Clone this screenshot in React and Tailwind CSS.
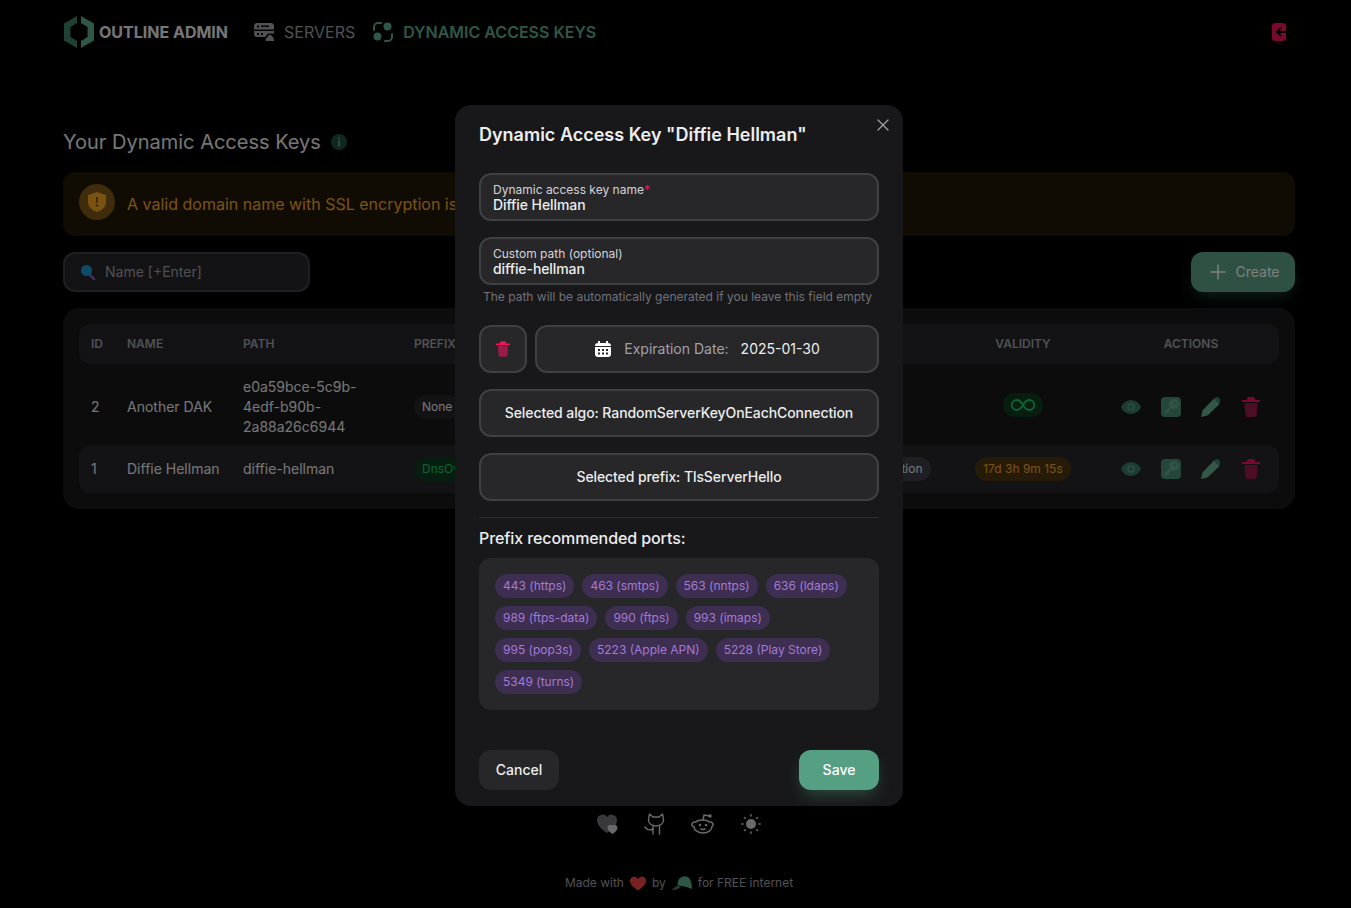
import { Plus, X } from 'lucide-react';
import { TbBrandReddit } from 'react-icons/tb';

const PORTS = [
  '443 (https)',
  '463 (smtps)',
  '563 (nntps)',
  '636 (ldaps)',
  '989 (ftps-data)',
  '990 (ftps)',
  '993 (imaps)',
  '995 (pop3s)',
  '5223 (Apple APN)',
  '5228 (Play Store)',
  '5349 (turns)',
];

const Logo = () => (
  <svg viewBox="0 0 30 32" className="h-8 w-[30px]">
    <path d="M13 0v7L6.500 11v10L13 25v7L0 24.500V7.500z" fill="#3f8068" />
    <path d="M17 0l13 7.500v17L17 32v-7l6.500-4V11L17 7z" fill="#5fae8e" />
  </svg>
);

const ServersIcon = () => (
  <svg viewBox="0 0 20 18" className="h-[18px] w-5" fill="#a1a1aa">
    <path d="M3 0h14a3 3 0 0 1 3 3v3.500H0V3a3 3 0 0 1 3-3z" />
    <path d="M0 8h20v2.500h-6L11 14H3a3 3 0 0 1-3-3z" />
    <path d="M11.500 18l.5-2.500 3-3.500h2l2.500 3 .5 3z" />
    <rect x="3" y="2.500" width="2" height="2" fill="#000" />
    <rect x="7" y="2.500" width="8" height="1.500" fill="#000" />
    <rect x="3" y="10" width="2" height="2" fill="#000" />
    <rect x="7" y="10" width="2" height="2" fill="#000" />
  </svg>
);

const KeysIcon = () => (
  <svg viewBox="0 0 20 20" className="h-5 w-5" fill="#5fae8e">
    <circle cx="14.500" cy="4.500" r="4" />
    <circle cx="4.500" cy="14.500" r="4" />
    <path d="M1 8V5a4 4 0 0 1 4-4h3M19 12v3a4 4 0 0 1-4 4h-3" fill="none" stroke="#5fae8e" strokeWidth="2" strokeLinecap="round" />
  </svg>
);

const LogoutIcon = () => (
  <svg viewBox="0 0 14 18" className="h-[18px] w-[14px]">
    <path d="M3 0h8a3 3 0 0 1 3 3v12a3 3 0 0 1-3 3H3a3 3 0 0 1-3-3V3a3 3 0 0 1 3-3z" fill="#f31260" />
    <path d="M9 5L5 9l4 4M5 9h9" fill="none" stroke="#000" strokeWidth="2" />
  </svg>
);

const InfoIcon = () => (
  <svg viewBox="0 0 16 16" className="h-4 w-4">
    <circle cx="8" cy="8" r="8" fill="#1f4f3d" />
    <rect x="7.200" y="3.500" width="1.600" height="1.800" fill="#5fae8e" />
    <rect x="7.200" y="6.500" width="1.600" height="6" fill="#5fae8e" />
  </svg>
);

const ShieldIcon = () => (
  <svg viewBox="0 0 18 20" className="h-5 w-[18px]">
    <path d="M9 0l9 3v7c0 5-4 8.500-9 10-5-1.500-9-5-9-10V3z" fill="#f5a524" />
    <rect x="8" y="5" width="2" height="6" rx="1" fill="#7a5616" />
    <circle cx="9" cy="13.500" r="1.200" fill="#7a5616" />
  </svg>
);

const SearchIcon = () => (
  <svg viewBox="0 0 16 16" className="h-4 w-4">
    <path d="M9.500 10.500L14 15" stroke="#7c5cc4" strokeWidth="2.500" strokeLinecap="round" />
    <circle cx="6.500" cy="6.500" r="5.500" fill="#1d9bd1" />
  </svg>
);

const EyeIcon = () => (
  <svg viewBox="0 0 20 14" className="h-[14px] w-5">
    <path d="M10 0c5 0 9 4 10 7-1 3-5 7-10 7S1 10 0 7c1-3 5-7 10-7z" fill="#3d7a64" />
    <circle cx="10" cy="7" r="3" fill="none" stroke="#5e9a84" strokeWidth="1.500" />
  </svg>
);

const KeyIcon = () => (
  <svg viewBox="0 0 20 20" className="h-5 w-5">
    <rect width="20" height="20" rx="4" fill="#4a8e76" />
    <circle cx="13" cy="7" r="5" fill="#63a88c" />
    <circle cx="14" cy="6" r="1.300" fill="#4a8e76" />
    <path d="M10 10l-6 6" stroke="#63a88c" strokeWidth="2.500" />
    <path d="M6 13l2 2" stroke="#63a88c" strokeWidth="2" />
  </svg>
);

const PencilIcon = () => (
  <svg viewBox="0 0 20 20" className="h-5 w-5">
    <path d="M13 1.500l5.500 5.500L6.500 18.500 0 20l1.500-6.500z" fill="#66b08f" />
    <path d="M13 1.500l1.500-1c1-.7 2.500-.6 3.500.4s1.700 2.600 1 3.600L18.500 7z" fill="#3f8068" />
  </svg>
);

const TrashIcon = ({ className }) => (
  <svg viewBox="0 0 18 20" className={className}>
    <path d="M6 0h6l1.500 3H18v2H0V3h4.500z" fill="#f31260" />
    <path d="M2.500 6h13l-.8 11.500A2.500 2.500 0 0 1 12.200 20H5.800a2.500 2.500 0 0 1-2.500-2.500z" fill="#9a1a4c" />
  </svg>
);

const CalendarIcon = () => (
  <svg viewBox="0 0 16 16" className="h-4 w-4">
    <path d="M3 0h2v2h6V0h2v2a3 3 0 0 1 3 3H0a3 3 0 0 1 3-3z" fill="#fff" />
    <path d="M0 6h16v7a3 3 0 0 1-3 3H3a3 3 0 0 1-3-3z" fill="#fff" />
    <g fill="#27272a">
      <rect x="3" y="8" width="2" height="2" />
      <rect x="7" y="8" width="2" height="2" />
      <rect x="11" y="8" width="2" height="2" />
      <rect x="3" y="11.500" width="2" height="2" />
      <rect x="7" y="11.500" width="2" height="2" />
      <rect x="11" y="11.500" width="2" height="2" />
    </g>
  </svg>
);

const HeartsIcon = () => (
  <svg viewBox="0 0 22 20" className="h-5 w-[22px]">
    <path d="M10 19C4 15 0 11 0 6a5.500 5.500 0 0 1 10-3 5.500 5.500 0 0 1 10 3c0 5-4 9-10 13z" fill="#71717a" />
    <path d="M15.500 20c-3-2-5-4-5-6.500a2.800 2.800 0 0 1 5-1.700 2.800 2.800 0 0 1 5 1.700c0 2.500-2 4.500-5 6.500z" fill="#d4d4d8" />
  </svg>
);

const GithubIcon = () => (
  <svg viewBox="0 0 22 22" className="h-[22px] w-[22px]" fill="none" stroke="#d4d4d8" strokeWidth="1.400" strokeLinecap="round" strokeLinejoin="round">
    <path d="M5.500 1L9 4h6l3.500-3 1 5.500c.5 3.500-3 6.500-7.500 6.500S4 10 4.500 6.500z" />
    <path d="M9 13v8M15.500 13v8" />
    <path d="M9 16c-3 1.500-6 1-8-2" />
  </svg>
);

const SunIcon = () => (
  <svg viewBox="0 0 20 20" className="ml-px h-5 w-5" stroke="#d4d4d8" strokeWidth="1.500" strokeLinecap="round" fill="#d4d4d8">
    <circle cx="10" cy="10" r="5" stroke="none" />
    <path d="M10 .8v1.200M10 18v1.200M.8 10H2M18 10h1.200M3.500 3.500l.8.800M15.700 15.700l.8.800M3.500 16.500l.8-.800M15.700 4.300l.8-.800" />
  </svg>
);

const HeartSmall = () => (
  <svg viewBox="0 0 18 16" className="h-[15px] w-4">
    <path d="M9 16C3.500 12 0 9 0 5a4.700 4.700 0 0 1 9-2 4.700 4.700 0 0 1 9 2c0 4-3.500 7-9 11z" fill="#f04545" />
  </svg>
);

const CapIcon = () => (
  <svg viewBox="0 0 22 16" className="h-[15px] w-5">
    <path d="M6 10C6 4 9 0 14 0s8 5 8 14c-4-2-10-3-16-4z" fill="#5fae8e" />
    <path d="M6 10.500C3 12 1 13.500 0 15c3 .5 7-1 10-3.500z" fill="#3f8068" />
  </svg>
);

const Chip = ({ className, children }) => (
  <span className={`inline-flex h-6 items-center rounded-full px-2 text-xs whitespace-nowrap ${className}`}>{children}</span>
);

const Th = ({ className = '', children }) => (
  <th className={`h-10 px-3 text-xs font-semibold text-[#a1a1aa] ${className}`}>{children}</th>
);

const Actions = () => (
  <div className="flex items-center justify-center gap-5">
    <EyeIcon />
    <KeyIcon />
    <PencilIcon />
    <TrashIcon className="h-5 w-5" />
  </div>
);

const App = () => {
  return (
    <div className="relative h-[908px] w-full overflow-hidden bg-black font-['Inter',sans-serif] text-[#ecedee]">
      <div className="ml-[63px] w-[1232px]">
        <nav className="flex h-16 items-center">
          <div className="ml-px flex items-center gap-[5px]">
            <Logo />
            <span className="text-base font-bold text-[#ecedee]">OUTLINE ADMIN</span>
          </div>
          <a className="ml-[26px] flex items-center gap-2.5 text-base text-[#a1a1aa]">
            <ServersIcon />
            SERVERS
          </a>
          <a className="ml-[18px] flex items-center gap-2.5 text-base font-semibold text-[#5fae8e]">
            <KeysIcon />
            DYNAMIC ACCESS KEYS
          </a>
          <div className="ml-auto mr-[9px]">
            <LogoutIcon />
          </div>
        </nav>

        <div className="mt-[60px] flex h-9 items-center gap-[10px]">
          <h1 className="text-xl font-normal">Your Dynamic Access Keys</h1>
          <InfoIcon />
        </div>

        <div className="mt-3 flex h-16 items-center gap-3 rounded-xl bg-[#211706] px-4">
          <div className="mb-1 flex h-9 w-9 items-center justify-center rounded-full bg-[#7c5818]">
            <ShieldIcon />
          </div>
          <span className="text-base text-[#f5a524]">
            A valid domain name with SSL encryption is required for dynamic access keys to work properly.
          </span>
        </div>

        <div className="mt-4 flex items-center justify-between">
          <div className="flex h-10 w-[247px] items-center gap-[9px] rounded-xl border-2 border-[#3f3f46] bg-[#27272a] px-[15px]">
            <SearchIcon />
            <span className="text-sm text-[#a1a1aa]">Name [+Enter]</span>
          </div>
          <button className="flex h-10 w-[104px] items-center justify-center gap-[5px] rounded-xl bg-[#5da286] text-sm text-white shadow-[0_8px_16px_-4px_rgba(85,160,131,0.4)]">
            <Plus size={24} strokeWidth={1.500} />
            Create
          </button>
        </div>

        <div className="mt-4 rounded-2xl bg-[#18181b] p-4">
          <table className="w-[1200px] table-fixed border-separate border-spacing-0 text-sm">
            <colgroup>
              <col className="w-9" />
              <col className="w-[116px]" />
              <col className="w-[171px]" />
              <col className="w-[286px]" />
              <col className="w-[255px]" />
              <col className="w-40" />
              <col className="w-44" />
            </colgroup>
            <thead>
              <tr>
                <Th className="rounded-l-xl bg-[#27272a] text-left">ID</Th>
                <Th className="bg-[#27272a] text-left">NAME</Th>
                <Th className="bg-[#27272a] text-left">PATH</Th>
                <Th className="bg-[#27272a] text-left">PREFIX</Th>
                <Th className="bg-[#27272a] text-left">ALGORITHM</Th>
                <Th className="bg-[#27272a] text-center">VALIDITY</Th>
                <Th className="rounded-r-xl bg-[#27272a] text-center">ACTIONS</Th>
              </tr>
            </thead>
            <tbody>
              <tr>
                <td className="h-[81px] px-3 pt-1">2</td>
                <td className="px-3 pt-1 whitespace-nowrap">Another DAK</td>
                <td className="px-3 pt-1 leading-5">e0a59bce-5c9b-4edf-b90b-2a88a26c6944</td>
                <td className="px-3 pt-1">
                  <Chip className="bg-[#27272a]">None</Chip>
                </td>
                <td className="px-3 pt-1">
                  <Chip className="bg-[#27272a]">None</Chip>
                </td>
                <td className="px-3 text-center">
                  <Chip className="bg-[#0e3a20] text-[#17c964]">
                    <svg viewBox="0 0 24 12" className="h-3 w-6" fill="none" stroke="#17c964" strokeWidth="1.800">
                      <path d="M12 6C10 2.500 8 1 5.800 1a5 5 0 0 0 0 10C8 11 10 9.500 12 6c2-3.500 4-5 6.200-5a5 5 0 0 1 0 10C16 11 14 9.500 12 6z" />
                    </svg>
                  </Chip>
                </td>
                <td className="px-3 pt-1">
                  <Actions />
                </td>
              </tr>
              <tr>
                <td className="h-12 rounded-l-xl bg-[#27272a] px-3">1</td>
                <td className="bg-[#27272a] px-3 whitespace-nowrap">Diffie Hellman</td>
                <td className="bg-[#27272a] px-3">diffie-hellman</td>
                <td className="bg-[#27272a] px-3">
                  <Chip className="bg-[#0e3a20] text-[#17c964]">DnsOverTls</Chip>
                </td>
                <td className="bg-[#27272a] px-3">
                  <Chip className="bg-[#3f3f46]">RandomServerKeyOnEachConnection</Chip>
                </td>
                <td className="bg-[#27272a] px-3 text-center">
                  <Chip className="bg-[#4d3610] text-[#f5a524]">17d 3h 9m 15s</Chip>
                </td>
                <td className="rounded-r-xl bg-[#27272a] px-3">
                  <Actions />
                </td>
              </tr>
            </tbody>
          </table>
        </div>

        <div className="mt-[303px] flex h-6 items-center justify-center gap-[25px]">
          <HeartsIcon />
          <GithubIcon />
          <TbBrandReddit size={24} color="#d4d4d8" strokeWidth={1.500} />
          <SunIcon />
        </div>

        <div className="mt-[39px] flex items-center justify-center gap-1.5 text-xs text-[#a1a1aa]">
          Made with <HeartSmall /> by <CapIcon /> for FREE internet
        </div>
      </div>

      <div className="absolute inset-0 bg-black/50">
        <div className="ml-[455px] mt-[105px] w-[448px] rounded-2xl bg-[#18181b]">
          <div className="relative px-6 py-4 text-lg font-semibold">
            Dynamic Access Key "Diffie Hellman"
            <X size={20} strokeWidth={1.500} className="absolute right-[10px] top-[10px] text-[#a1a1aa]" />
          </div>

          <div className="flex flex-col gap-4 px-6 py-2">
            <div className="flex h-12 flex-col justify-center rounded-xl border-2 border-[#3f3f46] bg-[#27272a] px-3">
              <label className="text-xs leading-4 text-[#d4d4d8]">
                Dynamic access key name<span className="text-[#f31260]">*</span>
              </label>
              <span className="pb-0.5 text-sm leading-[13px] font-medium tracking-[-0.09px]">Diffie Hellman</span>
            </div>

            <div>
              <div className="flex h-12 flex-col justify-center rounded-xl border-2 border-[#3f3f46] bg-[#27272a] px-3">
                <label className="text-xs leading-4 text-[#d4d4d8]">Custom path (optional)</label>
                <span className="pb-0.5 text-sm leading-[13px] font-medium tracking-[-0.09px]">diffie-hellman</span>
              </div>
              <p className="px-1 text-xs leading-6 text-[#71717a]">The path will be automatically generated if you leave this field empty</p>
            </div>

            <div className="flex gap-2">
              <button className="flex h-12 w-12 items-center justify-center rounded-xl border-2 border-[#3f3f46] bg-[#27272a]">
                <TrashIcon className="h-4 w-[14px]" />
              </button>
              <button className="flex h-12 flex-1 items-center justify-center gap-3 rounded-xl border-2 border-[#3f3f46] bg-[#27272a] pl-px text-sm">
                <CalendarIcon />
                <span className="ml-px text-[#a1a1aa]">Expiration Date:</span>
                2025-01-30
              </button>
            </div>

            <button className="h-12 rounded-xl border-2 border-[#3f3f46] bg-[#27272a] text-sm font-medium tracking-[-0.09px]">
              Selected algo: RandomServerKeyOnEachConnection
            </button>

            <button className="h-12 rounded-xl border-2 border-[#3f3f46] bg-[#27272a] text-sm font-medium tracking-[-0.09px]">
              Selected prefix: TlsServerHello
            </button>

            <div className="h-px bg-[#2e2e32]" />

            <div className="-mt-2 leading-6 font-medium tracking-[-0.09px]">Prefix recommended ports:</div>

            <div className="-mt-2 flex flex-wrap gap-2 rounded-xl bg-[#27272a] p-4">
              {PORTS.map((port) => (
                <Chip key={port} className="bg-[#3e2e52] text-[#a37bd6]">
                  {port}
                </Chip>
              ))}
            </div>
          </div>

          <div className="mt-4 flex justify-between px-6 py-4">
            <button className="h-10 w-20 rounded-xl bg-[#27272a] text-sm font-medium">Cancel</button>
            <button className="h-10 w-20 rounded-xl bg-[#55a083] text-sm font-medium text-white shadow-[0_8px_16px_-4px_rgba(85,160,131,0.4)]">
              Save
            </button>
          </div>
        </div>
      </div>
    </div>
  );
};

export default App;
